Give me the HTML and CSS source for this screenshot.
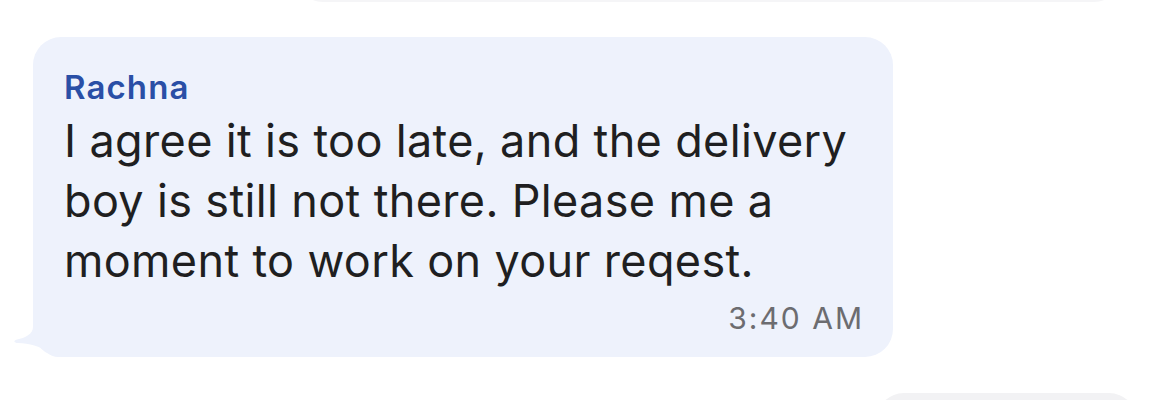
FILE: index.html
```html
<!DOCTYPE html>
<html lang="en">
<head>
    <meta charset="UTF-8">
    <title>Chat</title>
    <link rel="stylesheet" href="styles.css">
</head>
<body>
    <div class="chat">
        <div class="msg msg-out msg-prev"></div>

        <div class="msg msg-in">
            <div class="sender">Rachna</div>
            <p class="text">I agree it is too late, and the delivery boy is still not there. Please me a moment to work on your reqest.</p>
            <div class="time">3:40 AM</div>
            <svg class="tail" width="50" height="40" viewBox="0 0 50 40">
                <path d="M20 0 L20 10 C20 17 12 21 4 22.5 C0 23.5 1 26 5 26 C16 26.5 28 29 34 35 C37 38 40 40 47 40 L47 0 Z" />
            </svg>
        </div>

        <div class="msg msg-out msg-next"></div>
    </div>
</body>
</html>
```

FILE: styles.css
```css
body {
    margin: 0;
    background-color: #ffffff;
    font-family: Inter, Lato, sans-serif;
}
.chat {
    display: flex;
    flex-direction: column;
    height: 400px;
    overflow: hidden;
}
.msg {
    flex-shrink: 0;
    border-radius: 28px;
    box-sizing: border-box;
}
.msg-out {
    align-self: flex-end;
    background-color: #f2f2f4;
}
.msg-prev {
    width: 827px;
    height: 60px;
    margin-top: -58px;
    margin-right: 48px;
    background-color: #f5f5f7;
}
.msg-next {
    width: 261px;
    height: 60px;
    margin-top: 36px;
    margin-right: 33px;
}
.msg-in {
    position: relative;
    align-self: flex-start;
    width: 860px;
    margin: 35px 0 0 33px;
    padding: 32px 31px 21px;
    background-color: #eef2fc;
}
.sender {
    font-size: 33px;
    line-height: 36px;
    font-weight: 600;
    letter-spacing: 1.1px;
    color: #2a4fa6;
}
.text {
    margin: 6px 0 0;
    font-size: 45px;
    line-height: 60px;
    letter-spacing: 0.35px;
    color: #1f1f21;
}
.time {
    margin: 9px -2px 0 0;
    font-size: 30px;
    line-height: 36px;
    letter-spacing: 2px;
    text-align: right;
    color: #6c6c70;
}
.tail {
    position: absolute;
    left: -20px;
    bottom: 0;
    fill: #eef2fc;
}
```
